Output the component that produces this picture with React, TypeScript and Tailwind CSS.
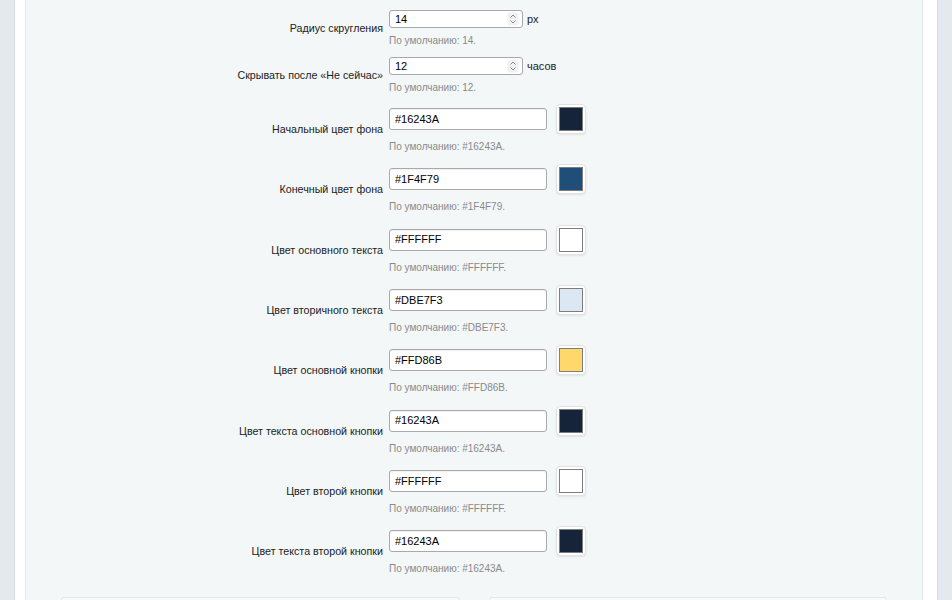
import React from 'react';

// ─── Data ────────────────────────────────────────────────────────────────────

type NumberRow = { label: string; value: string; unit: string; def: string };
type ColorRow = { label: string; value: string };

const numberRows: NumberRow[] = [
  { label: 'Радиус скругления', value: '14', unit: 'px', def: '14' },
  { label: 'Скрывать после «Не сейчас»', value: '12', unit: 'часов', def: '12' },
];

const colorRows: ColorRow[] = [
  { label: 'Начальный цвет фона', value: '#16243A' },
  { label: 'Конечный цвет фона', value: '#1F4F79' },
  { label: 'Цвет основного текста', value: '#FFFFFF' },
  { label: 'Цвет вторичного текста', value: '#DBE7F3' },
  { label: 'Цвет основной кнопки', value: '#FFD86B' },
  { label: 'Цвет текста основной кнопки', value: '#16243A' },
  { label: 'Цвет второй кнопки', value: '#FFFFFF' },
  { label: 'Цвет текста второй кнопки', value: '#16243A' },
];

// ─── Pieces ──────────────────────────────────────────────────────────────────

function Hint({ children, className = '' }: { children: React.ReactNode; className?: string }) {
  return <p className={`text-[10px] leading-[13px] text-[#8a8a8a] ${className}`}>{children}</p>;
}

function Spinner() {
  return (
    <svg width="12" height="14" viewBox="0 0 12 14" className="shrink-0">
      <rect x="0.5" y="0.5" width="11" height="13" rx="2" fill="#f2f2f2" />
      <path d="M3.5 5.5 L6 3 L8.5 5.5" fill="none" stroke="#8c8c8c" strokeWidth="1" />
      <path d="M3.5 8.5 L6 11 L8.5 8.5" fill="none" stroke="#8c8c8c" strokeWidth="1" />
    </svg>
  );
}

function Row({ label, className, children }: { label: string; className: string; children: React.ReactNode }) {
  return (
    <div className={`flex items-center ${className}`}>
      <div className="w-[363px] shrink-0 pr-[6px] text-right text-[10.7px] text-[#222]">{label}</div>
      <div>{children}</div>
    </div>
  );
}

function NumberField({ row }: { row: NumberRow }) {
  return (
    <Row label={row.label} className="py-[5px]">
      <div className="flex items-center gap-[4px]">
        <div className="flex h-[18px] w-[134px] items-center justify-between rounded-[3px] border border-[#a9a9a9] bg-white pl-[5px] pr-[3px] text-[11px] text-black">
          <span>{row.value}</span>
          <Spinner />
        </div>
        <span className="text-[11px] text-[#222]">{row.unit}</span>
      </div>
      <Hint className="mt-[6px]">По умолчанию: {row.def}.</Hint>
    </Row>
  );
}

function ColorField({ row }: { row: ColorRow }) {
  return (
    <Row label={row.label} className="py-[6.15px]">
      <div className="flex h-[28px] items-center gap-[9px]">
        <div className="flex h-[22px] w-[158px] items-center rounded-[3px] border border-[#a9a9a9] bg-white pl-[5px] text-[11px] text-black shadow-[inset_0_1px_1px_rgba(0,0,0,0.06)]">
          {row.value}
        </div>
        <div className="h-[30px] w-[30px] rounded-[4px] border border-[#e2e2e2] bg-white p-[2px] shadow-[0_1px_2px_rgba(0,0,0,0.08)]">
          <div className="h-full w-full border border-[#7d7d7d]" style={{ background: row.value }} />
        </div>
      </div>
      <Hint className="mt-[7px]">По умолчанию: {row.value}.</Hint>
    </Row>
  );
}

// ─── Page ────────────────────────────────────────────────────────────────────

export default function App() {
  return (
    <div
      className="min-h-screen bg-[#e3e9ec] px-[14px]"
      style={{ fontFamily: '"Liberation Sans", Arial, sans-serif' }}
    >
      <div className="min-h-screen border-x border-[#d6dde0] bg-white pl-[10px] pr-[14px]">
        <div className="min-h-screen border-x border-[#dfe5e8] bg-[#f3f7f8] pt-[5px]">
          {numberRows.map((r) => (
            <NumberField key={r.label} row={r} />
          ))}
          {colorRows.map((r) => (
            <ColorField key={r.label} row={r} />
          ))}

          <div className="mt-[16px] grid grid-cols-2 gap-[29px] px-[35px]">
            <div className="h-[100px] rounded-[3px] border border-[#e3e8ea] bg-[#f7f9fa]" />
            <div className="h-[100px] rounded-[3px] border border-[#e3e8ea] bg-[#f7f9fa]" />
          </div>
        </div>
      </div>
    </div>
  );
}
